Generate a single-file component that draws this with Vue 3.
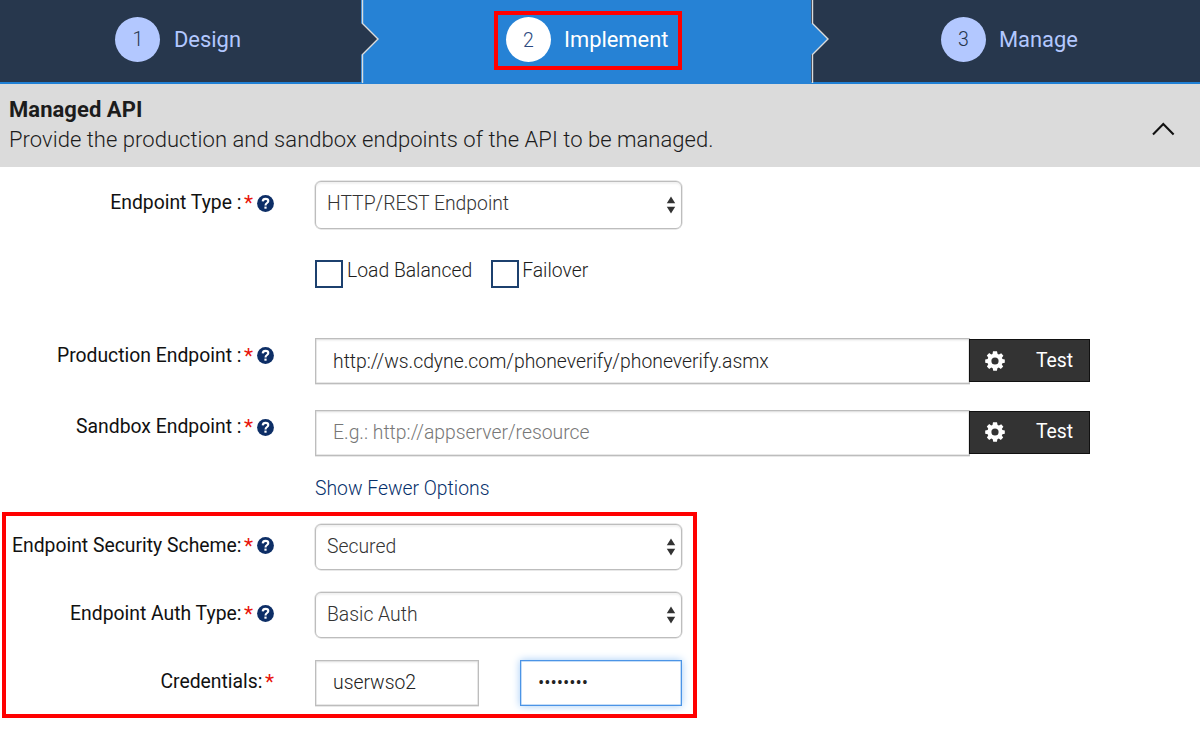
<script setup>
import { ref } from 'vue'

const steps = [
  { n: 1, name: 'Design', cls: 'design' },
  { n: 2, name: 'Implement', cls: 'implement' },
  { n: 3, name: 'Manage', cls: 'manage' },
]
const endpoints = [
  { label: 'Production Endpoint :', value: 'http://ws.cdyne.com/phoneverify/phoneverify.asmx', cls: 'production' },
  { label: 'Sandbox Endpoint :', value: '', cls: 'sandbox' },
]
const security = [
  { label: 'Endpoint Security Scheme:', value: 'Secured', cls: 'scheme' },
  { label: 'Endpoint Auth Type:', value: 'Basic Auth', cls: 'auth' },
]
const user = ref('userwso2')
</script>

<template>
  <div class="page">
    <nav class="wizard">
      <div v-for="s in steps" :key="s.n" class="step" :class="s.cls">
        <div class="step-body">
          <span class="num">{{ s.n }}</span>
          <span class="name">{{ s.name }}</span>
        </div>
        <svg v-if="s.n < 3" class="arrow" width="20" height="84" viewBox="0 0 20 84">
          <path class="tip" d="M0 23.5H1.5L17 39L1.5 54.5H0Z" />
          <path class="edge" d="M1.5 0V23.5L17 39L1.5 54.5V83" />
        </svg>
      </div>
    </nav>

    <header class="section">
      <div>
        <h2>Managed API</h2>
        <p>Provide the production and sandbox endpoints of the API to be managed.</p>
      </div>
      <svg class="chevron" width="24" height="16" viewBox="0 0 24 16">
        <path d="M2 13.5L12.3 3L22.6 13.5" />
      </svg>
    </header>

    <main class="form">
      <div class="row type">
        <label><span class="lt">Endpoint Type :</span><i>*</i>
          <svg class="help" viewBox="0 0 17 17"><circle cx="8.5" cy="8.5" r="8.4" /><path d="M5.7 6.4C5.9 4.5 7 3.9 8.5 3.9C10.2 3.9 11.3 4.8 11.3 6.1C11.3 8.1 8.5 8 8.5 10.4" /><rect x="7.4" y="11.6" width="2.2" height="2.1" /></svg>
        </label>
        <div class="select"><span>HTTP/REST Endpoint</span>
          <svg width="10" height="18" viewBox="0 0 10 18"><path d="M0.8 7.2L5 0.5L9.2 7.2ZM0.8 10.8H9.2L5 17.5Z" /></svg>
        </div>
      </div>

      <div class="checks">
        <span class="box"></span><span class="ct lb">Load Balanced</span>
        <span class="box second"></span><span class="ct fo">Failover</span>
      </div>

      <div v-for="e in endpoints" :key="e.cls" class="row" :class="e.cls">
        <label><span class="lt">{{ e.label }}</span><i>*</i>
          <svg class="help" viewBox="0 0 17 17"><circle cx="8.5" cy="8.5" r="8.4" /><path d="M5.7 6.4C5.9 4.5 7 3.9 8.5 3.9C10.2 3.9 11.3 4.8 11.3 6.1C11.3 8.1 8.5 8 8.5 10.4" /><rect x="7.4" y="11.6" width="2.2" height="2.1" /></svg>
        </label>
        <input class="field url" :value="e.value" placeholder="E.g.: http://appserver/resource">
        <div class="actions">
          <svg width="20" height="20" viewBox="0 0 20 20">
            <path fill-rule="evenodd" d="M8 0.3H12L12.6 2.9L14 3.5L16.2 2.2L18.4 4.8L16.9 6.7L17.4 8L19.8 8.4V11.7L17.4 12.2L16.8 13.5L18.2 15.6L15.8 18L13.8 16.6L12.4 17.2L11.9 19.8H8.2L7.7 17.2L6.3 16.6L4.2 18L1.9 15.6L3.2 13.5L2.7 12.2L0.2 11.7V8.4L2.7 7.9L3.2 6.6L1.8 4.6L4.2 2.1L6.2 3.5L7.5 2.9ZM10 6.4A3.6 3.6 0 1 0 10 13.6A3.6 3.6 0 1 0 10 6.4Z" />
          </svg>
          <span>Test</span>
        </div>
      </div>

      <a class="fewer">Show Fewer Options</a>

      <section class="secured">
        <div v-for="s in security" :key="s.cls" class="row" :class="s.cls">
          <label><span class="lt">{{ s.label }}</span><i>*</i>
            <svg class="help" viewBox="0 0 17 17"><circle cx="8.5" cy="8.5" r="8.4" /><path d="M5.7 6.4C5.9 4.5 7 3.9 8.5 3.9C10.2 3.9 11.3 4.8 11.3 6.1C11.3 8.1 8.5 8 8.5 10.4" /><rect x="7.4" y="11.6" width="2.2" height="2.1" /></svg>
          </label>
          <div class="select"><span>{{ s.value }}</span>
            <svg width="10" height="18" viewBox="0 0 10 18"><path d="M0.8 7.2L5 0.5L9.2 7.2ZM0.8 10.8H9.2L5 17.5Z" /></svg>
          </div>
        </div>
        <div class="row credentials">
          <label><span class="lt">Credentials:</span><i>*</i></label>
          <input v-model="user" class="field user">
          <div class="field password">••••••••</div>
        </div>
      </section>
    </main>
  </div>
</template>

<style>
body { margin: 0; background: #fff; }
</style>

<style scoped>
* { box-sizing: border-box; }
.page {
  width: 1200px; height: 730px; overflow: hidden;
  font-family: Roboto, "Liberation Sans", sans-serif;
  font-weight: 300; font-size: 19.35px; line-height: 24px; color: #1c1c1c;
}
.wizard { display: grid; grid-template-columns: 361px 450px 389px; height: 84px; background: #27374d; border-bottom: 2px solid #1f80d5; }
.step { position: relative; display: flex; height: 84px; color: #b3c8ff; }
.step-body { display: flex; align-items: center; height: 60px; }
.design .step-body { margin: 9px 0 0 115px; }
.implement { background: #2682d5; color: #fff; }
.implement .step-body { margin: 11px 0 0 133px; width: 188px; height: 59px; border: 4px solid #f00; padding: 0 0 2px 8px; }
.manage .step-body { margin: 9px 0 0 130px; }
.num { display: flex; align-items: center; justify-content: center; width: 45px; height: 45px; padding-top: 2px; border-radius: 50%; background: #b3c8ff; color: #27374d; font-size: 19.5px; }
.design .num { padding-left: 1px; }
.implement .num { background: #fff; color: #2c4a80; }
.name { margin-left: 14px; padding-top: 1px; font-size: 21.9px; font-weight: 400; }
.implement .name, .manage .name { margin-left: 13px; }
.arrow { position: absolute; left: 100%; top: 0; z-index: 1; }
.tip { fill: #27374d; }
.implement .tip { fill: #2682d5; }
.edge { fill: none; stroke: #dcdcdc; stroke-width: 1.4; }

.section { display: flex; justify-content: space-between; height: 83px; background: #dbdbdb; padding: 11px 25px 0 9px; }
h2 { margin: 0; font-size: 22px; line-height: 30px; font-weight: 700; letter-spacing: 0.05px; }
p { margin: 0; font-size: 22px; line-height: 30px; letter-spacing: 0.042px; }
.chevron { margin-top: 26px; fill: none; stroke: #111; stroke-width: 2.1; }

.form { display: flex; flex-direction: column; }
.row { display: flex; align-items: flex-start; }
label { display: flex; justify-content: flex-end; align-items: flex-start; width: 274px; margin-right: 41px; font-weight: 400; color: #111; white-space: nowrap; }
.lt { padding-top: 1px; }
i { font-style: normal; color: #e8150c; margin-left: 2.5px; padding-top: 1px; font-size: 21px; }
.help { width: 17px; height: 17px; margin: 5px 0 0 4px; }
.production .help { margin-top: 4px; }
.help circle { fill: #0d2e66; }
.help path { fill: none; stroke: #fff; stroke-width: 2.1; }
.help rect { fill: #fff; }

.select { display: flex; align-items: center; justify-content: space-between; width: 367px; height: 46px; border: 1.5px solid #bdbdbd; border-radius: 6px; padding: 0 5px 3px 11px; color: #333; box-shadow: 0 0 0 0.5px #d2d2d2, inset 0 2px 2px #f2f2f2; }
.select svg { fill: #333; margin-top: 3px; }
.type { height: 79px; padding-top: 14px; }
.type .select { height: 48px; }
.type label { padding-top: 9px; }

.checks { display: flex; height: 92px; padding-left: 315px; }
.box { width: 28px; height: 28px; border: 2px solid #1c406e; margin-top: 14px; }
.second { margin-left: 19px; }
.ct { margin: 13px 0 0 4px; }
.fo { margin-left: 3px; }

.production { height: 72px; }
.production label { padding-top: 5px; }
.sandbox label { padding-top: 4px; }
.sandbox { height: 64px; }
.field { height: 46px; border: 1.5px solid #bdbdbd; border-radius: 0; padding: 0 17px; font: inherit; color: #222; background: #fff; box-shadow: 0 0.5px 0 #d2d2d2, inset 0 0 0 0.5px #d2d2d2, inset 0 2px 2px #f2f2f2; outline: none; }
.url { width: 655px; }
.sandbox .url, .user { padding-bottom: 2px; }
.field::placeholder { color: #777; opacity: 1; }
.actions { display: flex; align-items: center; width: 121px; height: 43px; margin: 1px 0 0 -1px; padding-left: 15px; background: #333; border: 1px solid #111; color: #fff; font-weight: 400; }
.sandbox .actions { padding-bottom: 2px; }
.actions svg { fill: #fff; }
.actions span { margin-left: 31px; }
.fewer { height: 38px; padding: 1px 0 0 315px; line-height: 28px; color: #06306b; }

.secured { width: 695px; height: 206px; margin-left: 2px; border: 4px solid #f00; padding-top: 8px; }
.secured label { width: 268px; padding-top: 9px; }
.secured .help { margin-top: 4px; }
.secured .row { height: 68px; }
.secured .select { padding-bottom: 1px; }
.secured .select svg { margin-top: 1px; }
.user { width: 164px; }
.password { width: 162px; margin-left: 41px; border-color: #4b94e6; box-shadow: 0 0 8px #a5cdf7, inset 0 0 0 0.5px #8bbcf0; line-height: 43px; }
</style>
